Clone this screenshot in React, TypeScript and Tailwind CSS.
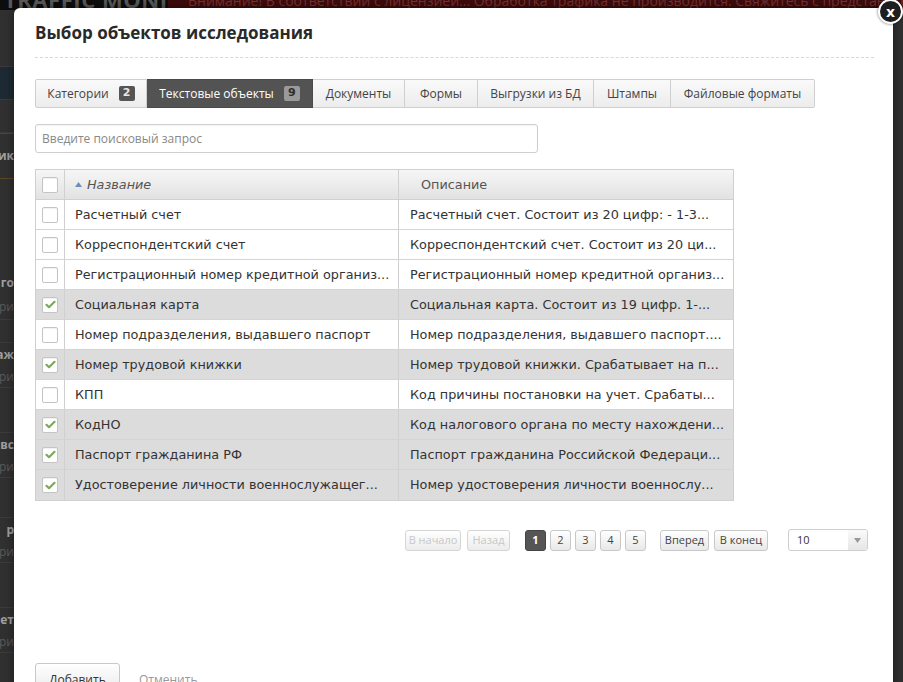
import React from "react"

const rows = [
  { name: "Расчетный счет", desc: "Расчетный счет. Состоит из 20 цифр: - 1-3...", checked: false },
  { name: "Корреспондентский счет", desc: "Корреспондентский счет. Состоит из 20 ци...", checked: false },
  { name: "Регистрационный номер кредитной организ...", desc: "Регистрационный номер кредитной организ...", checked: false },
  { name: "Социальная карта", desc: "Социальная карта. Состоит из 19 цифр. 1-...", checked: true },
  { name: "Номер подразделения, выдавшего паспорт", desc: "Номер подразделения, выдавшего паспорт....", checked: false },
  { name: "Номер трудовой книжки", desc: "Номер трудовой книжки. Срабатывает на п...", checked: true },
  { name: "КПП", desc: "Код причины постановки на учет. Срабаты...", checked: false },
  { name: "КодНО", desc: "Код налогового органа по месту нахождени...", checked: true },
  { name: "Паспорт гражданина РФ", desc: "Паспорт гражданина Российской Федераци...", checked: true },
  { name: "Удостоверение личности военнослужащег...", desc: "Номер удостоверения личности военнослу...", checked: true },
]

const tabs = [
  { label: "Категории", badge: "2", w: "w-[112px]" },
  { label: "Текстовые объекты", badge: "9", w: "w-[166px]", active: true },
  { label: "Документы", w: "w-[92px]" },
  { label: "Формы", w: "w-[73px]" },
  { label: "Выгрузки из БД", w: "w-[116px]" },
  { label: "Штампы", w: "w-[77px]" },
  { label: "Файловые форматы", w: "w-[144px]" },
]

// левая полоска страницы, видимая за окном
const sideRows = [
  { h: "h-[57px]", text: "" },
  { h: "h-[33px]", text: "", blue: true },
  { h: "h-[33px]", text: "" },
  { h: "h-[45px]", text: "ик", bold: true, brown: true },
  { h: "h-[92px]", text: "", brown: true },
  { h: "h-[25px]", text: "го", bold: true, plain: true },
  { h: "h-[25px]", text: "ори" },
  { h: "h-[23px]", text: "" },
  { h: "h-[24px]", text: "аж", bold: true, plain: true },
  { h: "h-[21px]", text: "ори" },
  { h: "h-[45px]", text: "" },
  { h: "h-[24px]", text: "вс", bold: true, plain: true },
  { h: "h-[21px]", text: "ори" },
  { h: "h-[40px]", text: "" },
  { h: "h-[24px]", text: "р", bold: true, plain: true },
  { h: "h-[21px]", text: "ори" },
  { h: "h-[45px]", text: "" },
  { h: "h-[24px]", text: "ет", bold: true, plain: true },
  { h: "h-[21px]", text: "ори" },
]

function Checkbox({ checked }: { checked: boolean }) {
  return (
    <div className="w-4 h-4 border border-[#c4c4c4] rounded-[2px] bg-white flex items-center justify-center shadow-[inset_0_1px_1px_rgba(0,0,0,0.06)]">
      {checked && (
        <svg width="11" height="9" viewBox="0 0 11 9">
          <path d="M1.5 4.8 L4 7.2 L9.5 1.8" fill="none" stroke="#7aaa5a" strokeWidth="2.2" strokeLinecap="round" strokeLinejoin="round" />
        </svg>
      )}
    </div>
  )
}

function PageBtn({ children, active, disabled, w }: { children: React.ReactNode; active?: boolean; disabled?: boolean; w: string }) {
  return (
    <div
      className={`${w} h-[21px] rounded-[3px] border flex items-center justify-center text-[11px] ${
        active
          ? "bg-[#555] border-[#444] text-white font-bold"
          : disabled
          ? "bg-gradient-to-b from-white to-[#ececec] border-[#d5d5d5] text-[#c8c8c8]"
          : "bg-gradient-to-b from-white to-[#e8e8e8] border-[#c8c8c8] text-[#444]"
      }`}
    >
      {children}
    </div>
  )
}

export default function App() {
  return (
    <div className="relative w-[903px] h-[682px] overflow-hidden bg-[#303030] font-['Open_Sans',sans-serif]">
      {/* страница под окном */}
      <div className="h-[10px] flex overflow-hidden">
        <div className="w-[168px] bg-[#0d0d0d] text-[#5a5a5a] font-bold text-[22px] leading-none -mt-[12px] pl-[4px] tracking-wide whitespace-nowrap overflow-hidden">
          TRAFFIC MONITOR
        </div>
        <div className="flex-1 bg-[#3d0c0c] text-[#7a3030] text-[14px] leading-none -mt-[6px] pl-[20px] overflow-hidden whitespace-nowrap">
          Внимание! В соответствии с лицензией... Обработка трафика не производится. Свяжитесь с представителями InfoWatch
        </div>
      </div>
      <div className="flex">
        <div className="w-[14px] flex flex-col">
          {sideRows.map((r, i) => (
            <div
              key={i}
              className={`${r.h} flex items-center justify-end overflow-hidden whitespace-nowrap text-[12px] ${
                r.brown ? "border-t border-[#5a4526]" : r.plain ? "" : "border-b border-[#3b3b3b]"
              } ${r.blue ? "bg-[#1d2a33]" : ""} ${r.bold ? "text-[#a0a0a0] font-bold" : "text-[#5a5a5a]"}`}
            >
              {r.text}
            </div>
          ))}
        </div>
      </div>

      {/* модальное окно */}
      <div className="absolute left-[14px] top-[8px] w-[879px] h-[700px] bg-white rounded-tl-[6px] rounded-tr-[2px] shadow-[0_0_8px_rgba(0,0,0,0.5)]">
        <div className="px-[21px]">
          <div className="pt-[13px] text-[17px] font-bold text-[#2a2a2a] leading-[24px]">Выбор объектов исследования</div>
          <div className="mt-[12px] border-t border-dashed border-[#d8d8d8] mr-[-2px]" />

          <div className="mt-[21px] flex">
            {tabs.map((t, i) => (
              <div
                key={t.label}
                className={`${t.w} h-[29px] flex items-center justify-center gap-[10px] text-[12px] border-y ${i === 0 ? "border-l rounded-l-[2px]" : ""} ${
                  i === tabs.length - 1 ? "rounded-r-[2px]" : ""
                } border-r ${
                  t.active
                    ? "bg-[#535353] border-[#4a4a4a] text-white"
                    : "bg-gradient-to-b from-[#fafafa] to-[#ececec] border-[#cfcfcf] text-[#444]"
                }`}
              >
                <span>{t.label}</span>
                {t.badge && (
                  <span
                    className={`h-[15px] min-w-[16px] px-[4px] rounded-[2px] text-[11px] font-bold flex items-center justify-center font-['DejaVu_Sans',sans-serif] ${
                      t.active ? "bg-[#9a9a9a] text-[#2e2e2e]" : "bg-[#555] text-[#e8e8e8]"
                    }`}
                  >
                    {t.badge}
                  </span>
                )}
              </div>
            ))}
          </div>

          <div className="mt-[16px] w-[503px] h-[29px] border border-[#cfcfcf] rounded-[3px] flex items-center px-[6px] text-[12px] text-[#888] shadow-[inset_0_1px_2px_rgba(0,0,0,0.05)]">
            Введите поисковый запрос
          </div>

          {/* таблица */}
          <div className="mt-[16px] w-[699px] border border-[#d0d0d0] font-['DejaVu_Sans',sans-serif] text-[12.8px]">
            <div className="flex h-[30px] bg-gradient-to-b from-[#f6f6f6] to-[#e2e2e2] border-b border-[#d0d0d0] text-[#555]">
              <div className="w-[29px] border-r border-[#d0d0d0] flex items-center justify-center">
                <Checkbox checked={false} />
              </div>
              <div className="w-[334px] border-r border-[#d0d0d0] flex items-center pl-[10px] italic">
                <svg width="7" height="5" viewBox="0 0 7 5" className="mr-[5px]">
                  <path d="M0 5 L3.5 0 L7 5 Z" fill="#6e8fb5" />
                </svg>
                Название
              </div>
              <div className="flex-1 flex items-center pl-[22px]">Описание</div>
            </div>
            {rows.map((r, i) => (
              <div
                key={i}
                className={`flex h-[30px] text-[#333] ${i < rows.length - 1 ? "border-b border-[#d4d4d4]" : ""} ${
                  r.checked ? "bg-[#dcdcdc]" : "bg-white"
                }`}
              >
                <div className="w-[29px] border-r border-[#d0d0d0] flex items-center justify-center">
                  <Checkbox checked={r.checked} />
                </div>
                <div className="w-[334px] border-r border-[#d0d0d0] flex items-center pl-[10px] whitespace-nowrap overflow-hidden">{r.name}</div>
                <div className="flex-1 flex items-center pl-[11px] whitespace-nowrap overflow-hidden">{r.desc}</div>
              </div>
            ))}
          </div>

          {/* пагинация */}
          <div className="mt-[28px] flex items-center pl-[370px]">
            <div className="flex gap-[6px]">
              <PageBtn disabled w="w-[56px]">В начало</PageBtn>
              <PageBtn disabled w="w-[43px]">Назад</PageBtn>
            </div>
            <div className="flex gap-[4px] ml-[15px]">
              <PageBtn active w="w-[21px]">1</PageBtn>
              <PageBtn w="w-[21px]">2</PageBtn>
              <PageBtn w="w-[21px]">3</PageBtn>
              <PageBtn w="w-[21px]">4</PageBtn>
              <PageBtn w="w-[21px]">5</PageBtn>
            </div>
            <div className="flex gap-[5px] ml-[14px]">
              <PageBtn w="w-[49px]">Вперед</PageBtn>
              <PageBtn w="w-[54px]">В конец</PageBtn>
            </div>
            <div className="ml-[20px] w-[80px] h-[22px] border border-[#cfcfcf] rounded-[3px] flex items-center text-[11px] text-[#333]">
              <span className="flex-1 pl-[8px]">10</span>
              <span className="w-[19px] h-full flex items-center justify-center bg-gradient-to-b from-[#fafafa] to-[#e6e6e6] rounded-r-[3px]">
                <svg width="7" height="5" viewBox="0 0 7 5">
                  <path d="M0 0 L7 0 L3.5 5 Z" fill="#999" />
                </svg>
              </span>
            </div>
          </div>

          {/* кнопки */}
          <div className="mt-[112px] flex items-center gap-[19px]">
            <div className="w-[85px] h-[30px] border border-[#c8c8c8] rounded-[3px] bg-gradient-to-b from-white to-[#eaeaea] flex items-center justify-center text-[12px] text-[#333] pt-[4px]">
              Добавить
            </div>
            <div className="text-[12px] text-[#999] pt-[4px]">Отменить</div>
          </div>
        </div>
      </div>

      {/* закрыть */}
      <div className="absolute left-[878px] top-[-1px] w-[25px] h-[25px] rounded-full bg-[#1e1e1e] border-2 border-white flex items-center justify-center text-white font-bold text-[14px] leading-none shadow-[0_0_3px_rgba(0,0,0,0.6)] font-['DejaVu_Sans',sans-serif]">
        x
      </div>
    </div>
  )
}
